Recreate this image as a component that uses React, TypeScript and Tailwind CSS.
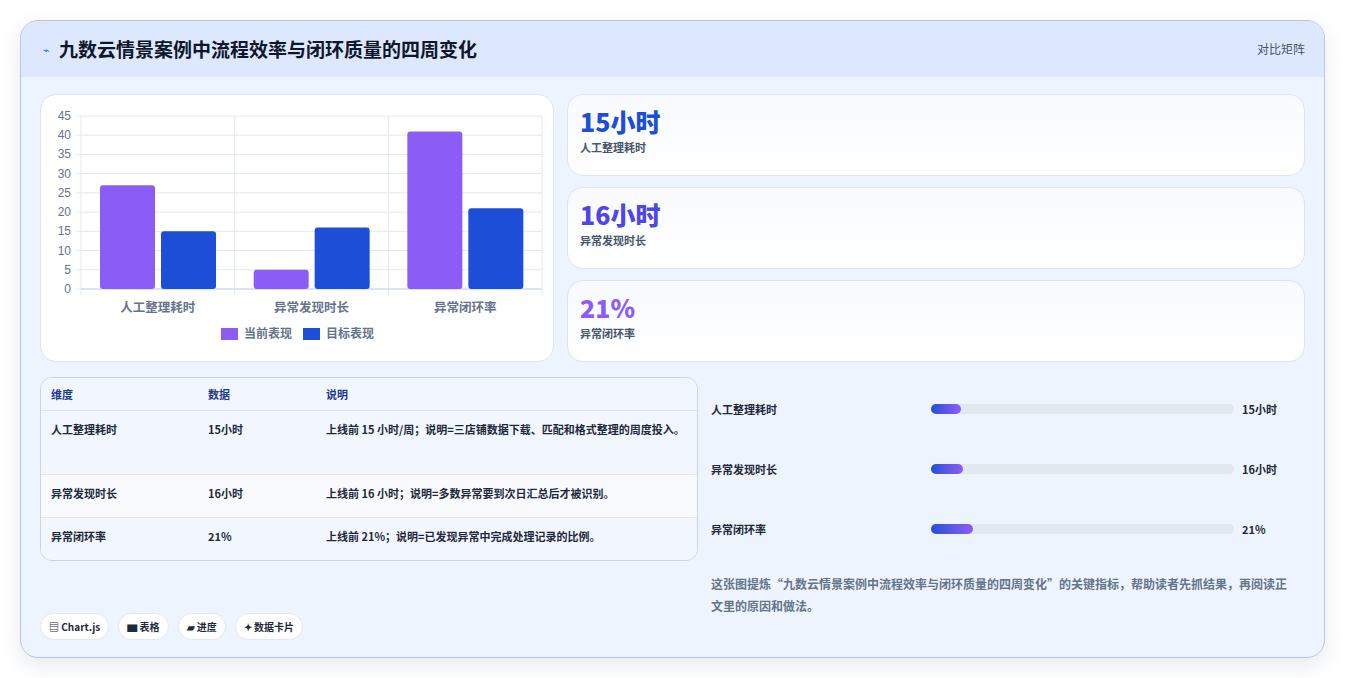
import React from "react";

const F = { fontFamily: '"Noto Sans CJK SC", "Noto Sans", sans-serif' };

function Chart() {
  const x0 = 40, y0 = 194, yTop = 21, w = 461;
  const s = (y0 - yTop) / 45;
  const cw = w / 3;
  const data = [
    ["人工整理耗时", 27, 15],
    ["异常发现时长", 5, 16],
    ["异常闭环率", 41, 21],
  ] as const;
  return (
    <svg width="513" height="267" className="block">
      {[0, 5, 10, 15, 20, 25, 30, 35, 40, 45].map((v) => {
        const y = y0 - v * s;
        return (
          <g key={v}>
            <line x1={x0 - 5} x2={x0 + w} y1={y} y2={y} stroke="#e2e8f0" strokeWidth="1" />
            <text x={x0 - 10} y={y + 4} textAnchor="end" fontSize="12" fill="#64748b" fontFamily="Liberation Sans, sans-serif">{v}</text>
          </g>
        );
      })}
      {[0, 1, 2, 3].map((i) => (
        <line key={i} x1={x0 + i * cw} x2={x0 + i * cw} y1={yTop} y2={y0 + 6} stroke="#e2e8f0" />
      ))}
      <line x1={x0} x2={x0 + w} y1={y0} y2={y0} stroke="#cbd5e1" />
      {data.map(([l, a, b], i) => {
        const cx = x0 + i * cw;
        return (
          <g key={l}>
            <rect x={cx + 19} y={y0 - a * s} width={55} height={a * s} rx="3" fill="#8b5cf6" />
            <rect x={cx + 80} y={y0 - b * s} width={55} height={b * s} rx="3" fill="#1d4ed8" />
            <text x={cx + cw / 2} y={y0 + 23} textAnchor="middle" fontSize="12.5" fill="#64748b" fontWeight="600" fontFamily='"Noto Sans CJK SC", sans-serif'>{l}</text>
          </g>
        );
      })}
      <rect x="180" y="233" width="17" height="12" fill="#8b5cf6" />
      <text x="203" y="243" fontSize="12" fill="#64748b" fontWeight="600" fontFamily='"Noto Sans CJK SC", sans-serif'>当前表现</text>
      <rect x="262" y="233" width="17" height="12" fill="#1d4ed8" />
      <text x="285" y="243" fontSize="12" fill="#64748b" fontWeight="600" fontFamily='"Noto Sans CJK SC", sans-serif'>目标表现</text>
    </svg>
  );
}

function Kpi({ v, l, c }: { v: string; l: string; c: string }) {
  return (
    <div className="h-[82px] rounded-2xl border border-[#dbe5f7] bg-gradient-to-b from-[#f8faff] to-white px-[12px] pt-[10px]">
      <div className={`text-[25px] leading-[32px] font-extrabold ${c}`}>{v}</div>
      <div className="text-[11px] font-semibold text-[#475569] mt-[2px]">{l}</div>
    </div>
  );
}

const rows = [
  ["人工整理耗时", "15小时", "上线前 15 小时/周；说明=三店铺数据下载、匹配和格式整理的周度投入。", "h-[64px] bg-[#f1f6ff]"],
  ["异常发现时长", "16小时", "上线前 16 小时；说明=多数异常要到次日汇总后才被识别。", "h-[43px] bg-[#f8fafd]"],
  ["异常闭环率", "21%", "上线前 21%；说明=已发现异常中完成处理记录的比例。", "h-[42px] bg-[#f1f6ff]"],
];

const bars = [
  ["人工整理耗时", "15小时", 10],
  ["异常发现时长", "16小时", 10.5],
  ["异常闭环率", "21%", 14],
] as const;

export default function App() {
  return (
    <div style={F} className="w-[1345px] h-[678px] bg-white pt-[20px] pl-[20px]">
      <div className="w-[1305px] h-[638px] rounded-[18px] border border-[#b9c6ec] bg-[#eef4fe] overflow-hidden shadow-[0_8px_20px_rgba(100,116,139,0.15)]">
        <div className="h-[56px] bg-[#dde8fe] flex items-center justify-between pl-[22px] pr-[19px]">
          <div className="flex items-center gap-[9px]">
            <span className="text-[#2563eb] text-[11px]">⌁</span>
            <span className="text-[19px] font-bold text-[#0f172a]">九数云情景案例中流程效率与闭环质量的四周变化</span>
          </div>
          <span className="text-[12px] text-[#475569]">对比矩阵</span>
        </div>
        <div className="px-[19px] pt-[17px]">
          <div className="flex gap-[13px]">
            <div className="w-[514px] h-[268px] rounded-2xl border border-[#dbe5f7] bg-white">
              <Chart />
            </div>
            <div className="flex-1 mr-[0px] w-[739px] flex flex-col gap-[11px]">
              <Kpi v="15小时" l="人工整理耗时" c="text-[#1d4ed8]" />
              <Kpi v="16小时" l="异常发现时长" c="text-[#4f46e5]" />
              <Kpi v="21%" l="异常闭环率" c="text-[#8b5cf6]" />
            </div>
          </div>
          <div className="flex gap-[13px] mt-[15px]">
            <div className="w-[658px] flex flex-col">
              <div className="rounded-xl border border-[#cbd5e1] overflow-hidden text-[11px] text-[#1e293b] font-semibold">
                <div className="h-[33px] flex items-center bg-[#f1f6ff] border-b border-[#dbe3f0] text-[#1e3a8a] font-bold">
                  <div className="w-[157px] pl-[10px]">维度</div>
                  <div className="w-[118px] pl-[10px]">数据</div>
                  <div className="flex-1 pl-[10px]">说明</div>
                </div>
                {rows.map(([a, b, c, cls], i) => (
                  <div key={a} className={`flex ${cls} ${i < 2 ? "border-b border-[#e2e8f0]" : ""} pt-[10px]`}>
                    <div className="w-[157px] pl-[10px]">{a}</div>
                    <div className="w-[118px] pl-[10px]">{b}</div>
                    <div className="flex-1 pl-[10px] pr-[10px] leading-[18px] -mt-[1px]">{c}</div>
                  </div>
                ))}
              </div>
              <div className="flex gap-[9px] mt-[52px] text-[10px] font-bold text-[#1e293b]">
                {["▤ Chart.js", "▆ 表格", "▰ 进度", "✦ 数据卡片"].map((t) => (
                  <span key={t} className="h-[27px] px-[8px] flex items-center rounded-full bg-white border border-[#e2e8f0]">{t}</span>
                ))}
              </div>
            </div>
            <div className="flex-1 pl-[0px] pr-[18px]">
              {bars.map(([l, v, p]) => (
                <div key={l} className="h-[64px] flex items-center text-[11px] font-semibold text-[#1e293b] -mt-[4px] first:mt-0">
                  <div className="w-[220px]">{l}</div>
                  <div className="w-[303px] h-[10px] rounded-full bg-[#e2e8f0]">
                    <div className="h-full rounded-full bg-gradient-to-r from-[#1d4ed8] to-[#8b5cf6]" style={{ width: `${p}%` }} />
                  </div>
                  <div className="ml-[8px] font-bold">{v}</div>
                </div>
              ))}
              <p className="mt-[12px] text-[12px] leading-[22px] font-semibold text-[#64748b]">
                这张图提炼“九数云情景案例中流程效率与闭环质量的四周变化”的关键指标，帮助读者先抓结果，再阅读正文里的原因和做法。
              </p>
            </div>
          </div>
        </div>
      </div>
    </div>
  );
}
